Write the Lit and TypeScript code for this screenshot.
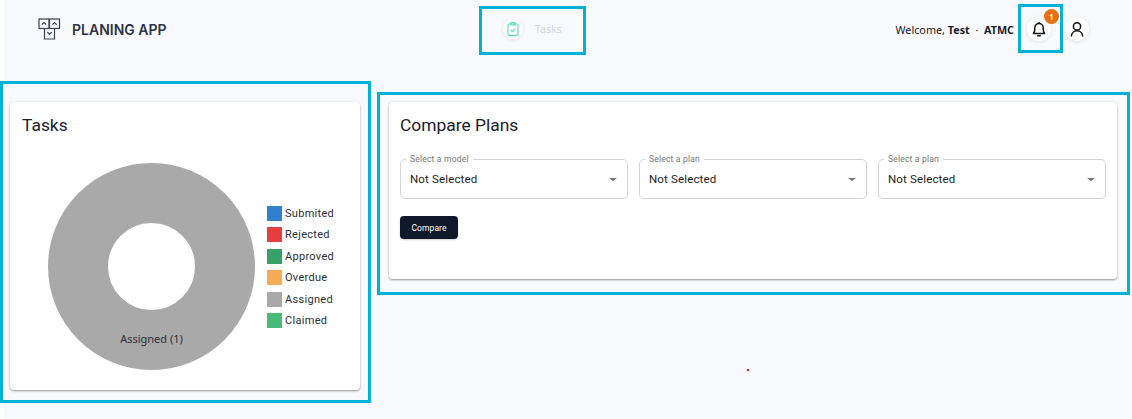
import { LitElement, html, css } from "lit";
import { customElement } from "lit/decorators.js";

const LEGEND = [
  ["Submited", "#3182ce"],
  ["Rejected", "#e53e3e"],
  ["Approved", "#38a169"],
  ["Overdue", "#f6ad55"],
  ["Assigned", "#a9a9a9"],
  ["Claimed", "#48bb78"],
];

@customElement("app-root")
export class AppRoot extends LitElement {
  static styles = css`
    :host { display: block; position: relative; width: 1132px; height: 419px; overflow: hidden; background: #fff; font-family: Roboto, sans-serif; color: #1a202c; }
    .page { margin-left: 4px; height: 419px; background: #f9fafd; }
    header { display: grid; grid-template-columns: 499px auto 1fr; align-items: center; height: 58px; }
    .brand { display: flex; align-items: center; gap: 11px; padding-left: 34px; font: 600 14px Inter, sans-serif; color: #2d3348; }
    .brand svg { display: block; }
    .brand span { padding-top: 1px; }
    .nav { display: flex; align-items: center; gap: 12px; font: 400 10.5px "Noto Sans", sans-serif; color: #d3d6df; }
    .round { width: 24px; height: 24px; border-radius: 50%; background: #fff; box-shadow: 0 1px 4px rgba(0, 0, 0, 0.1); display: flex; align-items: center; justify-content: center; position: relative; }
    .nav .round { width: 20px; height: 20px; }
    .right { display: flex; align-items: center; justify-content: flex-end; padding-right: 43px; font: 400 10.8px "Noto Sans", sans-serif; color: #1a202c; }
    .welcome { white-space: pre; margin-right: 13px; }
    .welcome b { font-weight: 700; }
    .right .round + .round { margin-left: 14px; }
    .badge { position: absolute; left: 17px; top: -8px; width: 15px; height: 15px; border-radius: 50%; background: #e8710f; color: #fff; font: 600 8.5px/15px "Noto Sans", sans-serif; text-align: center; }
    main { display: flex; align-items: flex-start; gap: 29px; padding: 44px 15px 0 6px; }
    .card { background: #fff; border-radius: 4px; box-shadow: 0 1px 2px rgba(0, 0, 0, 0.4), 0 0 4px rgba(0, 0, 0, 0.03); box-sizing: border-box; }
    h2 { margin: 0; padding-top: 1px; font: 400 17.4px/22px Roboto, sans-serif; color: #1a202c; }
    .tasks { width: 350px; height: 288px; padding: 11px 12px; }
    .chart { display: flex; align-items: flex-start; margin-top: 27px; }
    .chart svg { display: block; margin-left: 26px; flex: none; }
    .chart text { font: 400 11px "Noto Sans", sans-serif; fill: #2a2f38; }
    .legend { margin: 43px 0 0 12px; display: flex; flex-direction: column; gap: 6.4px; font: 400 11px/15px Roboto, sans-serif; letter-spacing: 0.3px; color: #2a2f38; }
    .legend div { display: flex; align-items: center; gap: 3px; }
    .legend i { width: 15px; height: 15px; display: block; }
    .compare { flex: 1; height: 177px; padding: 11px; }
    .selects { display: grid; grid-template-columns: repeat(3, 228px); gap: 11px; margin-top: 23px; }
    .select { position: relative; box-sizing: border-box; height: 40px; border: 1px solid #d4d4d4; border-radius: 5px; display: flex; align-items: center; justify-content: space-between; padding: 0 10px 0 9px; font: 400 11.5px Roboto, sans-serif; letter-spacing: 0.15px; color: #222; }
    .select label { position: absolute; left: 5px; top: -6px; padding: 0 4px; background: #fff; font: 400 8.5px/11px Roboto, sans-serif; letter-spacing: 0.2px; color: #777; }
    .arrow { width: 0; height: 0; border-left: 4px solid transparent; border-right: 4px solid transparent; border-top: 3.5px solid #757575; }
    button { display: block; margin-top: 17px; width: 58px; height: 23px; border: 0; padding: 0; border-radius: 4px; background: #0f172a; color: #fff; font: 400 8.5px Roboto, sans-serif; letter-spacing: 0.1px; box-shadow: 0 1px 2px rgba(0, 0, 0, 0.2); }
    .mark { position: absolute; box-sizing: border-box; border: 3px solid #00b2d6; pointer-events: none; }
    .m1 { left: 0; top: 81px; width: 371px; height: 322px; }
    .m2 { left: 377px; top: 92px; width: 753px; height: 203px; }
    .m3 { left: 479px; top: 6px; width: 107px; height: 49px; }
    .m4 { left: 1018px; top: 4px; width: 45px; height: 49px; }
    .dot { position: absolute; left: 747px; top: 369px; width: 2px; height: 2px; background: #f01818; box-shadow: 0 0 1px rgba(240, 24, 24, 0.5); }
  `;

  render() {
    return html`
      <div class="page">
        <header>
          <div class="brand">
            <svg width="23" height="22" viewBox="0 0 23 22" fill="none" stroke="#3a4052" stroke-width="1.2">
              <rect x="1" y="1" width="10" height="9.5" />
              <rect x="11.5" y="1" width="10" height="9.5" />
              <path d="M6.5 10.5V21H16.5V10.5" />
              <path d="M3.8 6.6L6 4.6L8.2 6.6M14.3 6.6L16.5 4.6L18.7 6.6M9.3 14.3L11.5 16.3L13.7 14.3" />
            </svg>
            <span>PLANING APP</span>
          </div>
          <div class="nav">
            <span class="round">
              <svg width="12" height="14" viewBox="0 0 12 14" fill="none" stroke="#56d8be" stroke-width="1.1">
                <rect x="1" y="2" width="10" height="11.4" rx="1" />
                <rect x="3.5" y="0.6" width="5" height="2.4" rx="0.6" />
                <path d="M3.8 8L5.4 9.6L8.4 6.6" />
              </svg>
            </span>
            Tasks
          </div>
          <div class="right">
            <span class="welcome">Welcome, <b>Test</b>  ·  <b>ATMC</b></span>
            <span class="round">
              <svg width="14" height="15" viewBox="0 0 14 15" fill="none" stroke="#111" stroke-width="1.5">
                <path d="M1.5 11.4H12.5C11.6 10.4 11.2 9.4 11.2 7V5.8C11.2 3.4 9.4 1.6 7 1.6S2.8 3.4 2.8 5.8V7C2.8 9.4 2.4 10.4 1.5 11.4Z" stroke-linejoin="round" />
                <path d="M7 0V1.6M5.2 13.7H8.8" />
              </svg>
              <span class="badge">1</span>
            </span>
            <span class="round">
              <svg width="14" height="15" viewBox="0 0 14 15" fill="none" stroke="#111" stroke-width="1.5">
                <circle cx="7" cy="4.4" r="3.6" />
                <path d="M1.4 14.4C1.4 11.4 3.6 8.8 7 8.8S12.6 11.4 12.6 14.4" />
              </svg>
            </span>
          </div>
        </header>
        <main>
          <section class="card tasks">
            <h2>Tasks</h2>
            <div class="chart">
              <svg width="207" height="207" viewBox="0 0 207 207">
                <circle cx="103.5" cy="103.5" r="73.5" fill="none" stroke="#a9a9a9" stroke-width="60" />
                <text x="103.5" y="180" text-anchor="middle">Assigned (1)</text>
              </svg>
              <div class="legend">
                ${LEGEND.map(
                  ([name, color]) => html`<div><i style="background:${color}"></i>${name}</div>`
                )}
              </div>
            </div>
          </section>
          <section class="card compare">
            <h2>Compare Plans</h2>
            <div class="selects">
              ${["Select a model", "Select a plan", "Select a plan"].map(
                (l) => html`<div class="select"><label>${l}</label>Not Selected<span class="arrow"></span></div>`
              )}
            </div>
            <button>Compare</button>
          </section>
        </main>
      </div>
      <div class="mark m1"></div>
      <div class="mark m2"></div>
      <div class="mark m3"></div>
      <div class="mark m4"></div>
      <div class="dot"></div>
    `;
  }
}
